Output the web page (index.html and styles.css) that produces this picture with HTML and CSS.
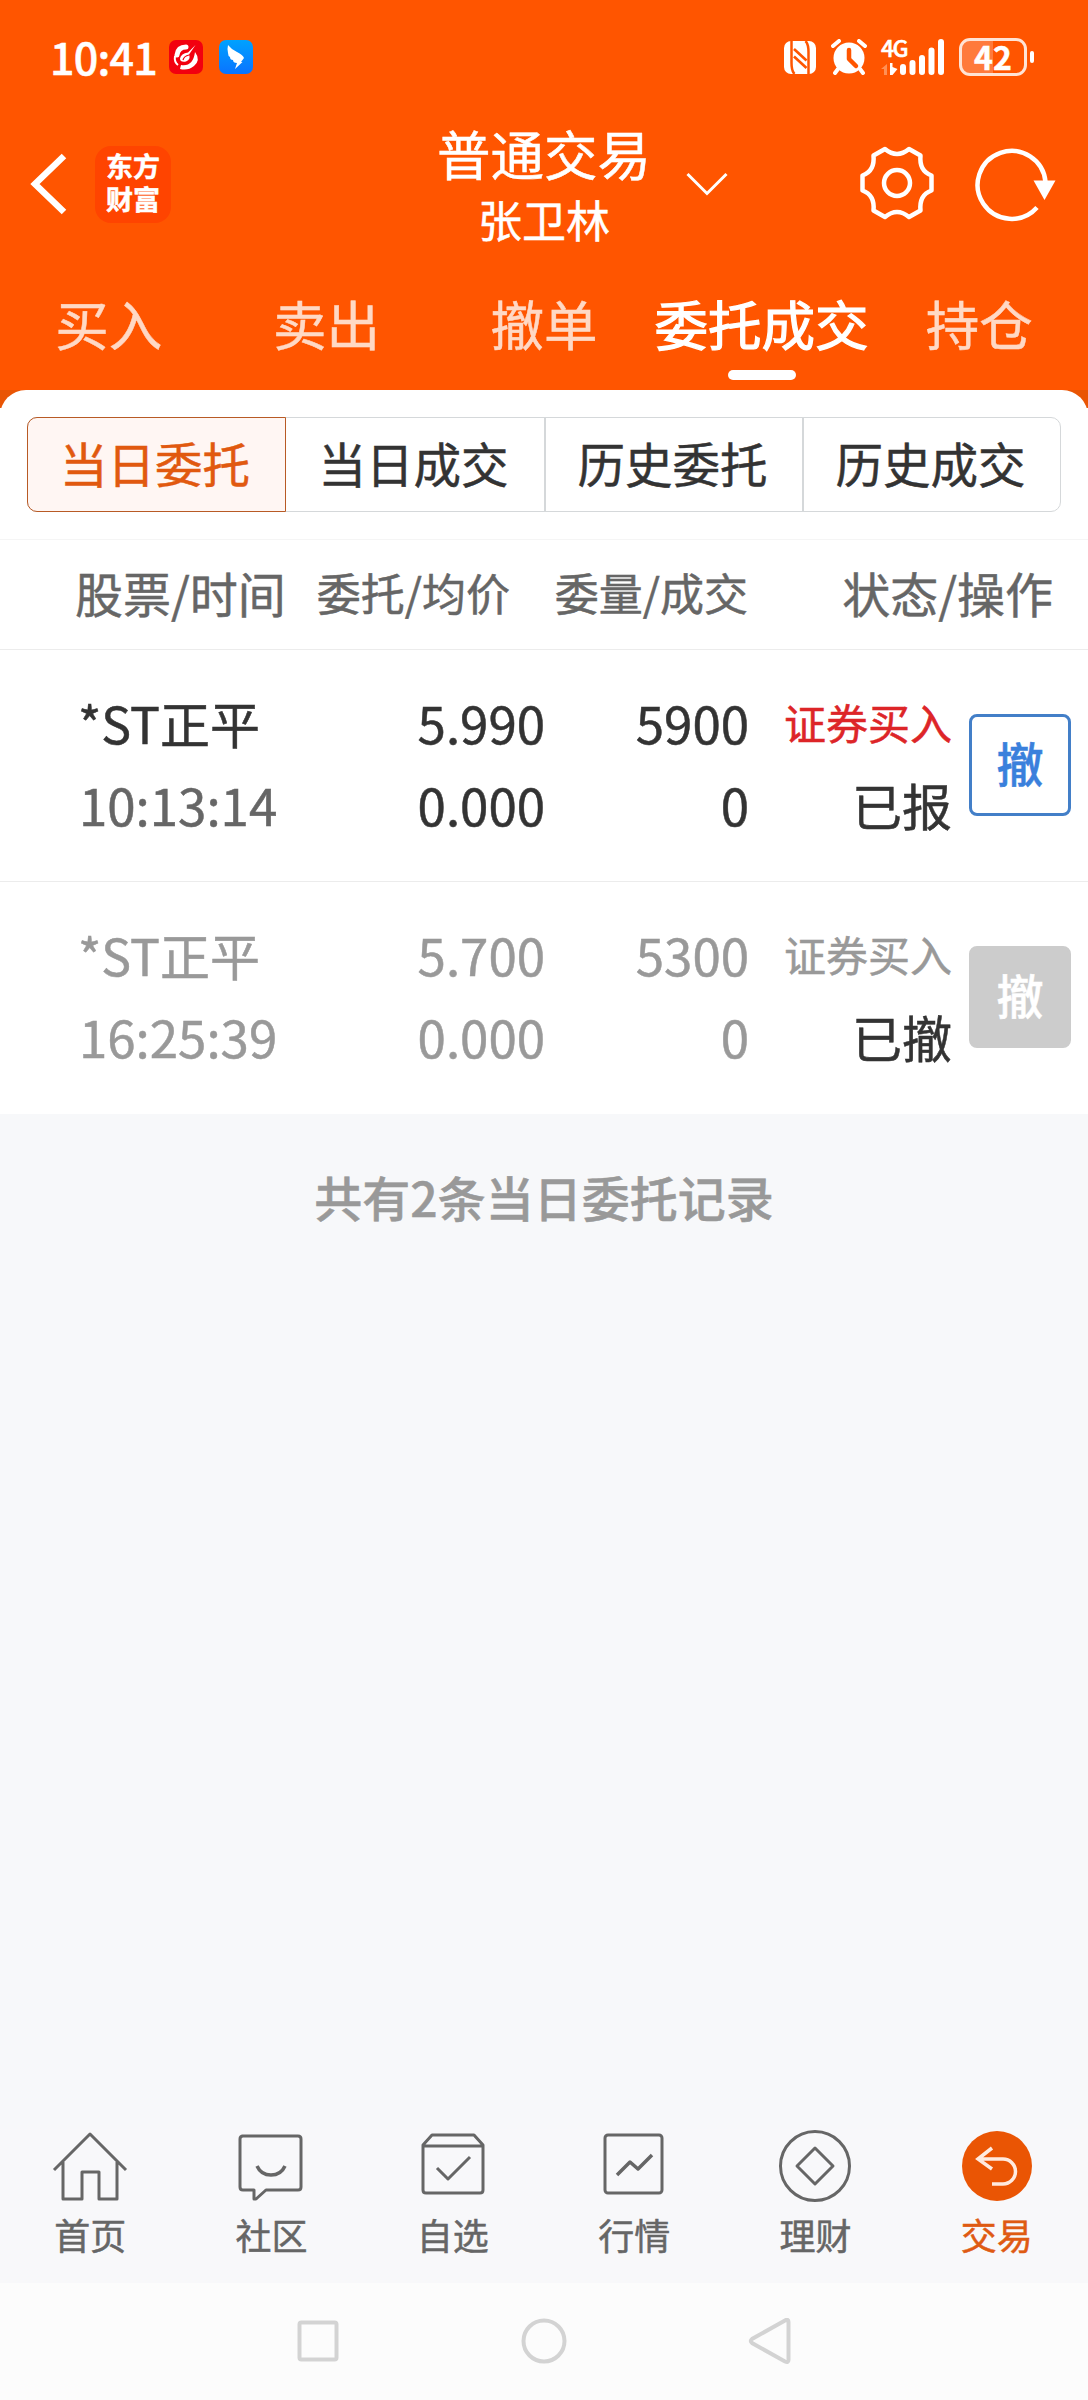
FILE: index.html
```html
<!DOCTYPE html>
<html lang="zh-CN">
<head>
<meta charset="utf-8">
<title>普通交易</title>
<link rel="stylesheet" href="styles.css">
</head>
<body>
<div class="screen">
  <header class="top">
    <div class="status">
      <span class="clock">10:41</span>
      <svg class="app-red" width="34" height="34" viewBox="0 0 34 34"><rect width="34" height="34" rx="7" fill="#f2000f"/><path d="M8 15Q9 7 17 7" fill="none" stroke="#fff" stroke-width="5" stroke-linecap="round"/><path d="M6 16Q5 22 9 25" fill="none" stroke="#fff" stroke-width="2"/><path d="M26.500 5 20 14.500q2 5-3 7-6 1-6-3 1-5 8-6z" fill="#fff"/><path d="M14 20q1-4 6-5" fill="none" stroke="#f2000f" stroke-width="1.200"/><path d="M26 12q6 8-1 14-6 5-14 3l1-4q12 2 14-13z" fill="#fff"/></svg>
      <svg class="app-blue" width="34" height="34" viewBox="0 0 34 34"><defs><linearGradient id="sky" x1="0" y1="0" x2="0" y2="1"><stop offset="0" stop-color="#00a2ff"/><stop offset="1" stop-color="#0a73ff"/></linearGradient></defs><rect width="34" height="34" rx="7" fill="url(#sky)"/><path d="M9 5q3 4 9 7 6 3 7 6l-3 4h1.500L16 29l2-6q-4 0-4-3-3 0-3-3-2-1-2-4Q8 9 9 5z" fill="#fff"/></svg>
      <span class="grow"></span>
      <svg width="32" height="33" viewBox="0 0 32 33"><rect width="32" height="33" rx="7" fill="#fff"/><path d="M7.500 0v22q0 8 3 11M24.500 33V11Q24.500 3 21.500 0" fill="none" stroke="#f50" stroke-width="2.500"/><path d="M10 8 22.500 19.500M10 15.500 22.500 27" stroke="#f50" stroke-width="2.600"/></svg>
      <svg class="alarm" width="36" height="36" viewBox="0 0 36 36"><circle cx="18" cy="19" r="15.500" fill="#fff"/><path d="M2 7l6-5M34 7l-6-5M7 30l-3 4M29 30l3 4" stroke="#fff" stroke-width="4" stroke-linecap="round"/><path d="M18 11v9l7 7" fill="none" stroke="#f50" stroke-width="4.500" stroke-linecap="round" stroke-linejoin="round"/></svg>
      <div class="signal">
        <span class="net">4G</span>
        <svg width="64" height="36" viewBox="0 0 64 36"><path d="M6 25v11H3v-6H0z" fill="#ff9055"/><path d="M9 24h2.500v4l5 2-5 6H9z" fill="#fff"/><path d="M22 28v5M31.500 24v9M41 19v14M50.500 11.500V33M60 3v30" stroke="#fff" stroke-width="6" stroke-linecap="round"/></svg>
      </div>
      <div class="battery"><span>42</span></div><i class="battery-tip"></i>
    </div>

    <div class="titlebar">
      <svg class="back" width="38" height="64" viewBox="0 0 38 64"><path d="M34 4 5 32 34 60" fill="none" stroke="#fff" stroke-width="6.500"/></svg>
      <div class="logo"><span>东方</span><span>财富</span></div>
      <div class="account"><strong>普通交易</strong><span>张卫林</span></div>
      <svg class="down" width="42" height="24" viewBox="0 0 42 24"><path d="M1.500 2 21 21.500 40.500 2" fill="none" stroke="#fff" stroke-width="3"/></svg>
      <svg class="gear" width="76" height="76" viewBox="-38 -38 76 76" fill="none" stroke="#fff" stroke-width="4.500" stroke-linejoin="round"><circle r="13"/><path d="M-12-34Q0-24 12-34L23.500-27.500Q22-12 34.500-7.500V7.500Q22 12 23.500 27.500L12 34Q0 24-12 34L-23.500 27.500Q-22 12-34.500 7.500V-7.500Q-22-12-23.500-27.500z"/></svg>
      <svg class="reload" width="84" height="76" viewBox="0 0 84 76"><path d="M64 61.500A34 34 0 1 1 72.500 36" fill="none" stroke="#fff" stroke-width="4.500"/><path d="M60.500 34.500h22L71.500 54z" fill="#fff"/></svg>
    </div>

    <nav class="tabs">
      <a>买入</a><a>卖出</a><a>撤单</a><a class="on">委托成交</a><a>持仓</a>
    </nav>
  </header>

  <main class="sheet-back">
    <section class="sheet">
      <div class="segments">
        <button class="on">当日委托</button><button>当日成交</button><button>历史委托</button><button>历史成交</button>
      </div>
      <div class="head">
        <span class="wide first">股票/时间</span><span class="price">委托/均价</span><span class="qty">委量/成交</span><span class="wide last">状态/操作</span>
      </div>
      <div class="order">
        <div class="name"><b>*ST正平</b><span class="time">10:13:14</span></div>
        <div class="price"><span>5.990</span><span>0.000</span></div>
        <div class="qty"><span>5900</span><span>0</span></div>
        <div class="state"><span class="side">证券买入</span><span class="result">已报</span></div>
        <button class="cancel">撤</button>
      </div>
      <div class="order done">
        <div class="name"><b>*ST正平</b><span class="time">16:25:39</span></div>
        <div class="price"><span>5.700</span><span>0.000</span></div>
        <div class="qty"><span>5300</span><span>0</span></div>
        <div class="state"><span class="side">证券买入</span><span class="result">已撤</span></div>
        <button class="cancel">撤</button>
      </div>
    </section>
  </main>
  <p class="summary">共有2条当日委托记录</p>

  <nav class="bottom">
    <a><svg width="76" height="76" viewBox="0 0 76 76"><path d="M2 40 38 4 74 40M11 32v37h19V42h17v27h18V32"/></svg>首页</a>
    <a><svg width="76" height="76" viewBox="0 0 76 76"><path d="M9 6H65Q68 6 68 9V57Q68 60 65 60H33L23 69H21V60H10Q7 60 7 57V9Q7 6 10 6z"/><path d="M24 36Q28 45 38 45T52 36" stroke-width="3.500"/></svg>社区</a>
    <a><svg width="76" height="76" viewBox="0 0 76 76"><path d="M17 5H59L68 15V60Q68 63 65 63H11Q8 63 8 60V15zM8 16H68M22 38 33 49 55 27"/></svg>自选</a>
    <a><svg width="76" height="76" viewBox="0 0 76 76"><rect x="9" y="5" width="57" height="58" rx="3"/><path d="M21 45 34 32 42 39 56 25" stroke-width="3.500"/></svg>行情</a>
    <a><svg width="76" height="76" viewBox="0 0 76 76"><circle cx="38" cy="36" r="34.500"/><path d="M38 18 56 36 38 54 20 36z"/></svg>理财</a>
    <a class="on"><svg width="76" height="76" viewBox="0 0 76 76"><circle class="disc" cx="38" cy="36" r="35"/><path d="M33 18 19 29 33 39M19 29H44A12.500 12.500 0 0 1 44 54H33"/></svg>交易</a>
  </nav>

  <footer class="system">
    <svg width="46" height="46" viewBox="0 0 46 46"><rect x="4.500" y="4.500" width="37" height="37" rx="2"/></svg>
    <svg width="46" height="46" viewBox="0 0 46 46"><circle cx="23" cy="23" r="20.500"/></svg>
    <svg width="46" height="46" viewBox="0 0 46 46"><path d="M38 2.500Q41.500.500 41.500 4V42Q41.500 45 38 43.500L5 25Q2.500 23 5 21z"/></svg>
  </footer>
</div>
</body>
</html>
```
FILE: styles.css
```css
* { box-sizing: border-box; }
body { margin: 0; font-family: "Noto Sans CJK SC", sans-serif; color: #333; -webkit-text-stroke: 0.5px currentColor; }
button { font: inherit; color: inherit; padding: 0; margin: 0; background: none; border: 0; }
svg { display: block; flex: none; }
.screen { width: 1088px; height: 2400px; display: flex; flex-direction: column; background: #f7f8fa; overflow: hidden; }

.top { height: 390px; flex: none; background: #ff5500; color: #fff; display: flex; flex-direction: column; }
.status { height: 114px; display: flex; align-items: center; padding: 0 54px 0 50px; }
.clock { font-size: 43px; font-weight: 500; line-height: 60px; width: 119px; letter-spacing: -0.800px; padding-bottom: 3px; }
.app-blue { margin-left: 16px; }
.grow { flex: 1; }
.alarm { margin-left: 15px; }
.signal { display: flex; margin: 0 14px 0 14px; position: relative; }
.net { position: absolute; left: 0; top: -6px; font-size: 23px; line-height: 28px; font-weight: 500; letter-spacing: -1.500px; }
.battery { width: 68px; height: 38px; border: 3px solid #ffe3d5; border-radius: 11px; background: linear-gradient(90deg, #ff7a3c 50%, #ff5500 50%); display: flex; align-items: center; justify-content: center; font-size: 32px; font-weight: 700; line-height: 32px; }
.battery span { padding-bottom: 2px; }
.battery-tip { width: 4px; height: 12px; margin-left: 3px; border-radius: 2px; background: #fff; }

.titlebar { height: 152px; display: flex; align-items: flex-start; padding: 0 28px 0 30px; }
.back { margin-top: 38px; }
.logo { margin: 32px 0 0 27px; width: 76px; height: 77px; border-radius: 16px; background: #ff4400; font-size: 27px; font-weight: 700; line-height: 33px; display: flex; flex-direction: column; align-items: center; padding-top: 3px; }
.account { margin-left: 263px; width: 220px; display: flex; flex-direction: column; align-items: center; white-space: nowrap; }
.account strong { font-size: 53.500px; font-weight: 400; line-height: 70px; margin-top: 4px; }
.account span { font-size: 44px; line-height: 60px; margin-top: 1px; }
.down { margin: 58px 0 0 32px; }
.gear { margin: 31px 0 0 131px; }
.reload { margin: 32px 0 0 38px; }

.tabs { flex: 1; display: grid; grid-template-columns: repeat(5, 1fr); font-size: 53.500px; line-height: 70px; text-align: center; padding-top: 22px; color: #ffd9c5; }
.tabs a.on { color: #fff; display: flex; flex-direction: column; align-items: center; -webkit-text-stroke-width: 1.200px; }
.tabs a.on::after { content: ""; width: 68px; height: 10px; border-radius: 5px; background: #fff; margin-top: 12px; }

.sheet-back { flex: none; background: linear-gradient(#e95504 18px, #fff 18px); }
.sheet { background: #fff; border-radius: 26px 26px 0 0; padding-top: 27px; }
.segments { margin: 0 27px; height: 95px; display: grid; grid-template-columns: repeat(4, 1fr); border: 1px solid #d5d8da; border-radius: 10px; font-size: 47.500px; }
.segments button { border-left: 2px solid #d5d8da; line-height: 89px; padding: 0 3px 4px 0; }
.segments button.on { border: 1px solid #b85a25; margin: -1px 0 -1px -1px; border-radius: 10px 0 0 10px; background: #fff6f3; color: #e1590f; }
.segments button.on + button { border-left: 0; }
.head { margin-top: 27px; height: 111px; border-top: 1px solid #f5f5f5; border-bottom: 1px solid #ececec; display: flex; align-items: center; color: #666; font-size: 44px; line-height: 66px; white-space: nowrap; padding-bottom: 5px; }
.head .wide { font-size: 48px; }
.head .first { width: 283px; padding-left: 75px; }
.head .price { width: 227px; text-align: right; }
.head .qty { width: 238px; text-align: right; }
.head .last { width: 305px; text-align: right; }

.order { height: 232px; display: flex; align-items: flex-start; padding-top: 31px; border-bottom: 1px solid #ececec; font-size: 51px; line-height: 82px; white-space: nowrap; }
.order > div { display: flex; flex-direction: column; height: 164px; }
.order .name { width: 300px; padding-left: 78px; }
.name b { font-weight: 400; font-size: 50px; }
.time { color: #666; padding-left: 1px; }
.order .price { width: 245px; align-items: flex-end; }
.order .qty { width: 204px; align-items: flex-end; }
.order .state { width: 203px; align-items: flex-end; }
.side { font-size: 42px; color: #dd2528; }
.result { font-size: 50px; }
.cancel { width: 102px; height: 102px; margin: 33px 0 0 17px; border: 3px solid #437fc8; border-radius: 8px; color: #3a80dc; font-size: 47px; font-weight: 500; line-height: 90px; padding-bottom: 6px; }
.done { color: #999; border-bottom: 0; }
.done .time, .done .side { color: #999; }
.done .result { color: #333; }
.done .cancel { background: #ccc; border-color: #ccc; color: #fff; }

.summary { margin: 47px 0 0; font-size: 48px; line-height: 70px; font-weight: 500; color: #999; text-align: center; }

.bottom { margin-top: auto; flex: none; height: 154px; display: grid; grid-template-columns: repeat(6, 1fr); font-size: 36px; line-height: 50px; color: #666; background: #f8f8fa; }
.bottom a { display: flex; flex-direction: column; align-items: center; padding-right: 1px; }
.bottom svg { fill: none; stroke: #666; stroke-width: 3; stroke-linejoin: round; margin: 1px 0 3px; }
.bottom .on { color: #df5a12; }
.bottom .on svg { stroke: #ffeadf; stroke-width: 3.500; stroke-linejoin: miter; }
.bottom .disc { fill: #ea5504; stroke: none; }

.system { flex: none; height: 117px; display: flex; justify-content: center; gap: 180px; padding-top: 35px; background: #fcfcfc; }
.system svg { fill: none; stroke: #d3d3d3; stroke-width: 4; }
```
